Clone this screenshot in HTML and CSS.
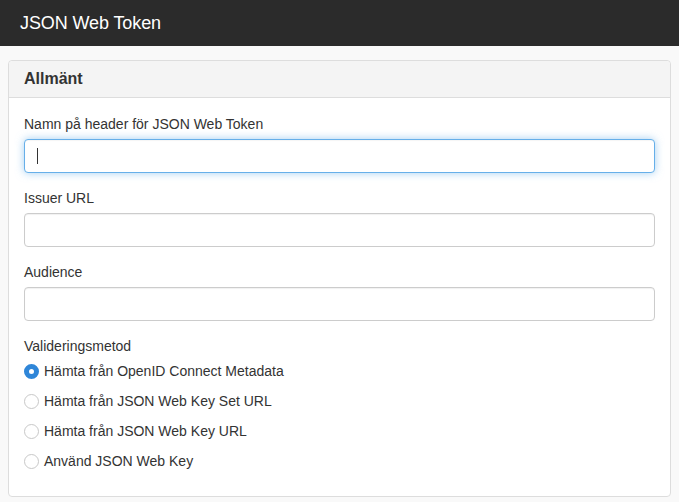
FILE: index.html
```html
<!DOCTYPE html>
<html lang="sv">
<head>
  <meta charset="UTF-8">
  <title>JSON Web Token</title>
  <link rel="stylesheet" href="styles.css">
</head>
<body>

  <header class="topbar">
    <h1 class="title">JSON Web Token</h1>
  </header>

  <main class="page">
    <section class="panel">
      <div class="panel-heading">Allmänt</div>
      <div class="panel-body">
        <div class="form-group">
          <label for="headerName">Namn på header för JSON Web Token</label>
          <div class="input-wrap">
            <input id="headerName" class="form-control focused" type="text">
            <span class="caret"></span>
          </div>
        </div>
        <div class="form-group">
          <label for="issuer">Issuer URL</label>
          <input id="issuer" class="form-control" type="text">
        </div>
        <div class="form-group">
          <label for="audience">Audience</label>
          <input id="audience" class="form-control" type="text">
        </div>
        <div class="form-group">
          <label>Valideringsmetod</label>
          <div class="radios">
            <label class="radio"><input type="radio" name="method" checked> Hämta från OpenID Connect Metadata</label>
            <label class="radio"><input type="radio" name="method"> Hämta från JSON Web Key Set URL</label>
            <label class="radio"><input type="radio" name="method"> Hämta från JSON Web Key URL</label>
            <label class="radio"><input type="radio" name="method"> Använd JSON Web Key</label>
          </div>
        </div>
      </div>
    </section>
  </main>

</body>
</html>
```

FILE: styles.css
```css
body {
  margin: 0;
  font-family: 'Liberation Sans', Arial, sans-serif;
  font-size: 14px;
  line-height: 20px;
  background: #f9f9f9;
  color: #333;
}

.topbar {
  background: #2b2b2b;
  height: 46px;
  display: flex;
  align-items: center;
  padding: 0 20px;
}

.title {
  margin: 0;
  color: #fff;
  font-size: 18px;
  font-weight: normal;
  letter-spacing: -0.1px;
}

.page {
  padding: 14px 8px 0;
}

.panel {
  background: #fff;
  border: 1px solid #ddd;
  border-radius: 4px;
}

.panel-heading {
  background: #f4f4f4;
  border-bottom: 1px solid #ddd;
  border-radius: 4px 4px 0 0;
  padding: 8px 15px;
  font-size: 16px;
  font-weight: bold;
}

.panel-body {
  padding: 16px 15px 10px;
}

.form-group {
  margin-bottom: 15px;
}

.form-group > label {
  display: block;
  margin-bottom: 5px;
}

.form-control {
  display: block;
  box-sizing: border-box;
  width: 100%;
  height: 34px;
  margin: 0;
  padding: 6px 12px;
  border: 1px solid #ccc;
  border-radius: 4px;
  background: #fff;
  font: inherit;
  outline: none;
  box-shadow: inset 0 1px 1px rgba(0,0,0,0.06);
}

.form-control.focused {
  border-color: #66afe9;
  box-shadow: inset 0 1px 1px rgba(0,0,0,0.04), 0 0 8px rgba(102,175,233,0.6);
}

.input-wrap {
  position: relative;
}

.caret {
  position: absolute;
  left: 13px;
  top: 9px;
  width: 1px;
  height: 16px;
  background: #333;
}

.radios {
  display: flex;
  flex-direction: column;
  gap: 10px;
}

.radio {
  display: flex;
  align-items: center;
  gap: 5px;
  height: 20px;
}

.radio input {
  appearance: none;
  -webkit-appearance: none;
  box-sizing: border-box;
  width: 15px;
  height: 15px;
  margin: 0;
  border: 1px solid #c8c8c8;
  border-radius: 50%;
  background: #fff;
}

.radio input:checked {
  border: 5px solid #2f86d8;
  background: #fff;
}
```
